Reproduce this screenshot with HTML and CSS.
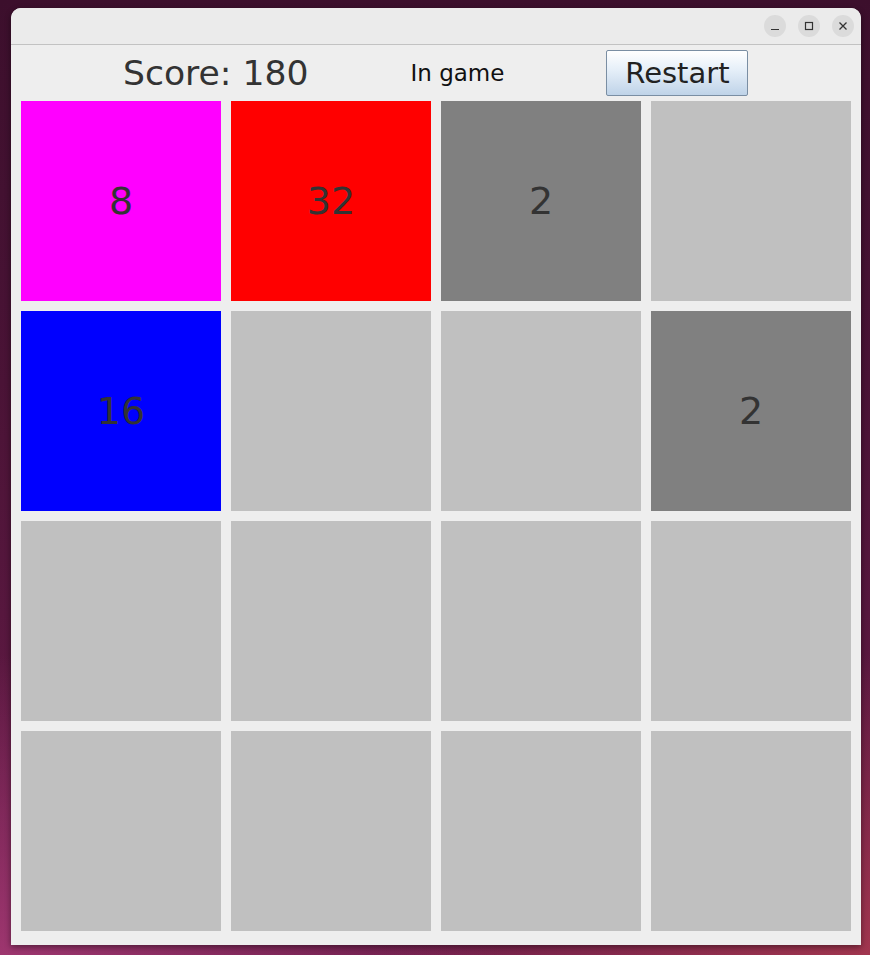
FILE: index.html
```html
<!DOCTYPE html>
<html lang="en">
<head>
    <meta charset="UTF-8">
    <meta name="viewport" content="width=device-width, initial-scale=1.0">
    <title>2048</title>
    <link rel="stylesheet" href="styles.css">
</head>
<body>
    <div class="window">
        <div class="titlebar">
            <span class="wbtn">
                <svg width="10" height="10" viewBox="0 0 10 10"><line x1="1" y1="8.5" x2="9" y2="8.5" stroke="#333" stroke-width="1.2"/></svg>
            </span>
            <span class="wbtn">
                <svg width="10" height="10" viewBox="0 0 10 10"><rect x="1.5" y="1.5" width="7" height="7" fill="none" stroke="#333" stroke-width="1.2"/></svg>
            </span>
            <span class="wbtn">
                <svg width="10" height="10" viewBox="0 0 10 10"><path d="M1.5 1.5 L8.5 8.5 M8.5 1.5 L1.5 8.5" stroke="#333" stroke-width="1.3"/></svg>
            </span>
        </div>
        <div class="content">
            <div class="header">
                <span class="score">Score: 180</span>
                <span class="status">In game</span>
                <button class="restart">Restart</button>
            </div>
            <div class="board">
                <div class="tile t8">8</div>
                <div class="tile t32">32</div>
                <div class="tile t2">2</div>
                <div class="tile"></div>

                <div class="tile t16">16</div>
                <div class="tile"></div>
                <div class="tile"></div>
                <div class="tile t2">2</div>

                <div class="tile"></div>
                <div class="tile"></div>
                <div class="tile"></div>
                <div class="tile"></div>

                <div class="tile"></div>
                <div class="tile"></div>
                <div class="tile"></div>
                <div class="tile"></div>
            </div>
        </div>
    </div>
</body>
</html>
```

FILE: styles.css
```css
html, body {
    margin: 0;
    height: 955px;
    overflow: hidden;
}
body {
    font-family: "DejaVu Sans", sans-serif;
    background:
        radial-gradient(ellipse 500px 300px at 0% 100%, rgba(170, 60, 120, 0.8), rgba(170, 60, 120, 0)),
        radial-gradient(ellipse 500px 300px at 100% 100%, rgba(175, 60, 80, 0.8), rgba(175, 60, 80, 0)),
        linear-gradient(to bottom, #3c0f2c 0%, #4a1336 40%, #6a1d4a 100%);
    padding-top: 8px;
    padding-left: 11px;
    box-sizing: border-box;
}
.window {
    width: 850px;
    height: 937px;
    background-color: #eeeeee;
    border-radius: 10px 10px 0 0;
    box-shadow: 0 2px 6px rgba(0, 0, 0, 0.45);
    overflow: hidden;
}
.titlebar {
    height: 36px;
    background-color: #ebebeb;
    border-bottom: 1px solid #c2c2c2;
    display: flex;
    justify-content: flex-end;
    align-items: center;
    gap: 12px;
    padding-right: 7px;
}
.wbtn {
    width: 22px;
    height: 22px;
    border-radius: 50%;
    background-color: #dbdbdb;
    display: flex;
    align-items: center;
    justify-content: center;
}
.content {
    padding: 0 10px;
}
.header {
    height: 56px;
    display: flex;
    align-items: center;
    gap: 102px;
    padding-left: 102px;
}
.score {
    font-size: 34.6px;
    color: #333333;
}
.status {
    font-size: 23px;
    color: #111111;
}
.restart {
    width: 142px;
    height: 46px;
    font-family: "DejaVu Sans", sans-serif;
    font-size: 29px;
    color: #222222;
    border: 1px solid #7a8ea3;
    border-radius: 2px;
    background: linear-gradient(to bottom, #ffffff 0%, #e4eef8 45%, #bfd3e8 100%);
    padding: 0;
}
.board {
    display: grid;
    grid-template-columns: repeat(4, 200px);
    grid-auto-rows: 200px;
    gap: 10px;
}
.tile {
    background-color: #c0c0c0;
    display: flex;
    align-items: center;
    justify-content: center;
    font-size: 38px;
    color: #333333;
}
.t2 {
    background-color: #808080;
}
.t8 {
    background-color: #ff00ff;
}
.t16 {
    background-color: #0000ff;
}
.t32 {
    background-color: #ff0000;
}
```
